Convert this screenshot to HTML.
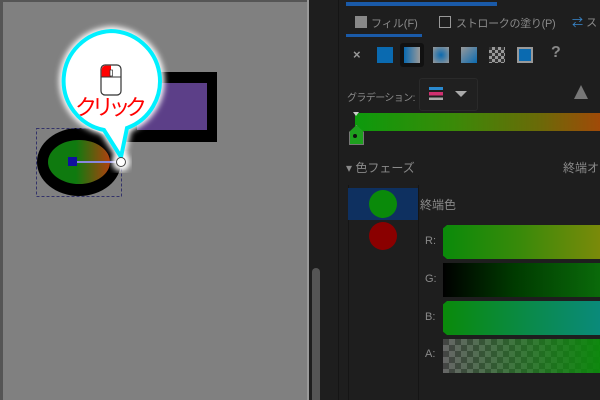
<!DOCTYPE html>
<html><head><meta charset="utf-8"><style>
body{margin:0;width:600px;height:400px;overflow:hidden;background:#1e1e1e;font-family:"Liberation Sans","Noto Sans CJK JP",sans-serif;position:relative}
.a{position:absolute}
.t{color:#8a8a8a;font-size:11px;white-space:nowrap}
</style></head><body>
<div class="a" style="left:0;top:0;width:307px;height:400px;background:#808080;border-top:2px solid #555;border-left:3px solid #555;box-sizing:border-box"></div>
<div class="a" style="left:307px;top:0;width:2px;height:400px;background:#999"></div>
<div class="a" style="left:312px;top:268px;width:8px;height:132px;background:#555;border-radius:4px 4px 0 0"></div>
<div class="a" style="left:338px;top:0;width:1px;height:400px;background:#151515"></div>
<div class="a" style="left:348px;top:185px;width:1px;height:215px;background:#151515"></div>
<div class="a" style="left:418px;top:185px;width:1px;height:215px;background:#151515"></div>
<svg class="a" style="left:0;top:0" width="307" height="400">
<defs>
<linearGradient id="eg" x1="0" x2="1"><stop offset="0.45" stop-color="#0f7a0f"/><stop offset="1" stop-color="#b0400e"/></linearGradient>
<filter id="gl"><feGaussianBlur stdDeviation="3"/></filter>
</defs>
<rect x="120" y="72" width="97" height="70" fill="#000"/>
<rect x="137" y="83" width="70" height="47" fill="#5c3f88"/>
<ellipse cx="79" cy="162" rx="42" ry="34" fill="#000"/>
<ellipse cx="79" cy="162" rx="31" ry="22" fill="url(#eg)"/>
<rect x="36.5" y="128.5" width="85" height="68" fill="none" stroke="#33336a" stroke-dasharray="3,2"/>
<line x1="73" y1="162" x2="121" y2="162" stroke="#8888dd" stroke-width="2"/>
<rect x="68" y="157" width="9" height="9" fill="#1010a0"/>
<circle cx="121" cy="162" r="9" fill="#fff" filter="url(#gl)"/>
<path d="M111 31 A50 50 0 0 1 127 128 L121 157 L104 130 A50 50 0 0 1 111 31Z" fill="#fff" stroke="#fff" stroke-width="9" filter="url(#gl)"/>
<path d="M111 31 A50 50 0 0 1 127 128 L121 157 L104 130 A50 50 0 0 1 111 31Z" fill="#fff" stroke="#00f0ff" stroke-width="4"/>
<circle cx="121" cy="162" r="4.5" fill="#fff" stroke="#444" stroke-width="1"/>
<rect x="101" y="65" width="20" height="30" rx="4" fill="#fff" stroke="#333" stroke-width="1.2"/>
<path d="M105 65.6 h6 v11 h-9.4 v-7 a4 4 0 0 1 3.4 -4z" fill="#f00"/>
<line x1="101" y1="77" x2="121" y2="77" stroke="#333"/>
<rect x="110" y="70" width="2.5" height="6" fill="#fff" stroke="#333" stroke-width=".7"/>
<text x="111" y="115" text-anchor="middle" font-size="22" fill="#f00" font-family="Liberation Sans,Noto Sans CJK JP,sans-serif" textLength="72">クリック</text>
</svg>
<div class="a" style="left:346px;top:2px;width:151px;height:4px;background:#1a5aa8"></div>
<div class="a" style="left:355px;top:16px;width:12px;height:12px;background:#888"></div>
<div class="a t" style="left:371px;top:15px;font-size:11px">フィル(F)</div>
<div class="a" style="left:439px;top:16px;width:10px;height:10px;border:1px solid #999"></div>
<div class="a t" style="left:456px;top:15px;font-size:11px;letter-spacing:-0.3px">ストロークの塗り(P)</div>
<div class="a t" style="left:572px;top:14px;color:#3a8ad0">⇄ <span style="color:#8a8a8a">ス</span></div>
<div class="a" style="left:346px;top:34px;width:76px;height:3px;background:#1a5aa8"></div>
<div class="a t" style="left:353px;top:47px;font-size:13px;font-weight:bold;color:#999">×</div>
<div class="a" style="left:377px;top:47px;width:16px;height:16px;background:#0a6ab0"></div>
<div class="a" style="left:400px;top:43px;width:24px;height:24px;background:#111;border-radius:3px"></div>
<div class="a" style="left:404px;top:47px;width:16px;height:16px;background:linear-gradient(90deg,#0a6ab0,#999)"></div>
<div class="a" style="left:433px;top:47px;width:16px;height:16px;background:radial-gradient(#0a6ab0,#999)"></div>
<div class="a" style="left:461px;top:47px;width:16px;height:16px;background:linear-gradient(135deg,#999,#0a6ab0)"></div>
<div class="a" style="left:489px;top:47px;width:16px;height:16px;background:repeating-conic-gradient(#999 0 25%,#333 0 50%) 0 0/6px 6px"></div>
<div class="a" style="left:517px;top:47px;width:12px;height:12px;border:2px solid #999;background:#0a6ab0"></div>
<div class="a t" style="left:551px;top:44px;font-size:16px;font-weight:bold;color:#888">?</div>
<div class="a t" style="left:347px;top:89px;font-size:10px;letter-spacing:-0.6px">グラデーション:</div>
<div class="a" style="left:419px;top:78px;width:57px;height:31px;background:#202020;border:1px solid #2a2a2a;border-radius:3px"></div>
<div class="a" style="left:429px;top:87px;width:14px;height:13px;background:linear-gradient(#2a8ad0 0 25%,#1e1e1e 25% 40%,#d03070 40% 65%,#1e1e1e 65% 80%,#aaa 80%)"></div>
<div class="a" style="left:455px;top:91px;width:0;height:0;border-left:6px solid transparent;border-right:6px solid transparent;border-top:6px solid #aaa"></div>
<div class="a" style="left:574px;top:85px;width:0;height:0;border-left:7px solid transparent;border-right:7px solid transparent;border-bottom:14px solid #777"></div>
<div class="a" style="left:355px;top:113px;width:245px;height:18px;background:linear-gradient(90deg,#0c9a0c,#3a8a08 40%,#6a6a08 75%,#a04a08)"></div>
<div class="a" style="left:353px;top:112px;width:0;height:0;border-left:3px solid transparent;border-right:3px solid transparent;border-top:4px solid #ccc"></div>
<div class="a" style="left:349px;top:125px;width:13px;height:18px;background:#1ea01e;border:1px solid #777;clip-path:polygon(50% 0,100% 35%,100% 100%,0 100%,0 35%)"></div>
<div class="a" style="left:353px;top:134px;width:4px;height:4px;background:#111;border-radius:2px"></div>
<div class="a t" style="left:346px;top:159px;font-size:12px">▾ 色フェーズ</div>
<div class="a t" style="left:563px;top:159px;font-size:12px">終端オ</div>
<div class="a" style="left:348px;top:188px;width:70px;height:32px;background:#0e3060"></div>
<div class="a" style="left:369px;top:190px;width:28px;height:28px;border-radius:50%;background:#0a8a0a"></div>
<div class="a" style="left:369px;top:222px;width:28px;height:28px;border-radius:50%;background:#8a0000"></div>
<div class="a t" style="left:420px;top:196px;font-size:12px">終端色</div>
<div class="a t" style="left:425px;top:235px">R:</div>
<div class="a t" style="left:425px;top:273px">G:</div>
<div class="a t" style="left:425px;top:311px">B:</div>
<div class="a t" style="left:425px;top:348px">A:</div>
<div class="a" style="left:443px;top:225px;width:157px;height:34px;background:linear-gradient(90deg,#0a8a0a,#3a8a0a 50%,#7a8a0a);clip-path:polygon(4px 0,100% 0,100% 100%,4px 100%,0 90%,0 10%)"></div>
<div class="a" style="left:443px;top:263px;width:157px;height:34px;background:linear-gradient(90deg,#000,#003a00 45%,#0a6a0a)"></div>
<div class="a" style="left:443px;top:301px;width:157px;height:34px;background:linear-gradient(90deg,#0a8a0a,#0a8a4a 55%,#0a8a7a);clip-path:polygon(4px 0,100% 0,100% 100%,4px 100%,0 90%,0 10%)"></div>
<div class="a" style="left:443px;top:339px;width:157px;height:34px;background:linear-gradient(90deg,rgba(10,138,10,0),rgba(10,138,10,.95)),repeating-conic-gradient(#666 0 25%,#444 0 50%) 0 0/12px 12px"></div>
</body></html>
